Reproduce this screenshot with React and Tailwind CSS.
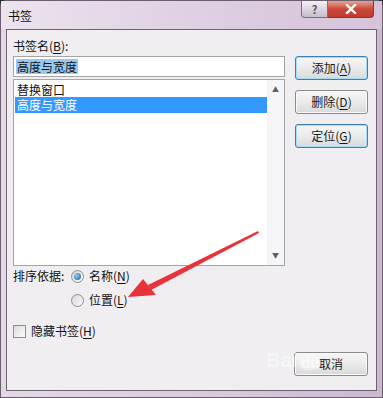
import React from 'react';

const font = { fontFamily: '"Noto Sans CJK SC", "Liberation Sans", sans-serif' };

const Btn = ({ children, active, className = '' }) => (
  <div
    className={`flex h-[24px] w-[73px] items-center justify-center rounded-[3px] border bg-gradient-to-b from-[#f6f6f6] via-[#ebebeb] to-[#d9d9d9] text-[12px] text-[#1a1a1a] ${
      active ? 'border-[#3c7fb1] shadow-[inset_0_0_0_1px_#a6dcf5]' : 'border-[#8a8a8a] shadow-[inset_0_0_0_1px_#fafafa]'
    } ${className}`}
  >
    {children}
  </div>
);

const U = ({ children }) => <span className="underline underline-offset-2">{children}</span>;

const Radio = ({ checked }) => (
  <span className="flex h-[13px] w-[13px] items-center justify-center rounded-full border border-[#8e8f8f] bg-gradient-to-br from-[#d6d6d6] to-[#fbfbfb]">
    {checked && <span className="h-[7px] w-[7px] rounded-full bg-[radial-gradient(circle_at_35%_35%,#8fd0f5,#1d5e8c)]" />}
  </span>
);

export default function App() {
  return (
    <div className="relative h-[398px] w-[383px] overflow-hidden bg-[#2a2a2a]" style={font}>
      <div className="absolute inset-0 rounded-t-[6px] border border-[#6b5f6e] bg-gradient-to-r from-[#e4d8e6] via-[#dccbe0] to-[#cdb8d2]">
        {/* title bar */}
        <div className="flex h-[28px] items-start bg-gradient-to-r from-[#ece4ee] via-[#dfd0e3] to-[#d6c3da]">
          <div className="pl-[7px] pt-[8px] text-[12px] leading-[14px] text-[#111]">书签</div>
          <div className="ml-auto mr-[8px] flex">
            <div className="flex h-[17px] w-[27px] items-center justify-center rounded-bl-[4px] border border-t-0 border-[#7a6f7d] bg-gradient-to-b from-[#f4f0f5] to-[#c9bccc] text-[11px] font-bold leading-none text-[#555]">
              ?
            </div>
            <div className="flex h-[17px] w-[46px] items-center justify-center rounded-br-[4px] border border-l-0 border-t-0 border-[#7a3a36] bg-gradient-to-b from-[#e4a294] via-[#c9483a] to-[#c23b2c]">
              <svg width="12" height="10" viewBox="0 0 12 10">
                <path d="M2 1 L10 9 M10 1 L2 9" stroke="#fff" strokeWidth="2.4" strokeLinecap="square" />
              </svg>
            </div>
          </div>
        </div>

        {/* client */}
        <div className="ml-[5px] mr-[5px] h-[362px] border border-[#6d6470] bg-[#f0eef1]">
          <div className="flex pl-[6px] pt-[9px]">
            <div className="w-[272px]">
              <div className="h-[17px] text-[12px] leading-[14px] text-[#111]">
                书签名(<U>B</U>):
              </div>
              <div className="flex h-[21px] items-center border border-[#a5a5a5] bg-white px-[2px]">
                <span className="bg-[#99c9ef] px-[1px] text-[12px] leading-[15px] text-[#111]">高度与宽度</span>
              </div>
              <div className="mt-[2px] flex h-[187px] border border-[#a5a5a5] bg-white">
                <div className="flex-1 pl-[1px] pt-[2px] text-[12px]">
                  <div className="h-[15px] px-[2px] leading-[15px] text-[#111]">替换窗口</div>
                  <div className="h-[16px] bg-[#3399ff] px-[2px] leading-[16px] text-white">高度与宽度</div>
                </div>
                <div className="flex w-[17px] flex-col items-center justify-between bg-[#f6f5f7] py-[6px] text-[7px] leading-none text-[#606060]">
                  <span>▲</span>
                  <span>▼</span>
                </div>
              </div>
            </div>
            <div className="ml-[10px] flex flex-col gap-[10px] pt-[17px]">
              <Btn active>
                添加(<U>A</U>)
              </Btn>
              <Btn>
                删除(<U>D</U>)
              </Btn>
              <Btn active>
                定位(<U>G</U>)
              </Btn>
            </div>
          </div>

          <div className="mt-[3px] flex pl-[6px] text-[12px] leading-[14px] text-[#111]">
            <span className="w-[58px]">排序依据:</span>
            <div className="flex flex-col gap-[10px]">
              <div className="flex items-center gap-[5px]">
                <Radio checked />
                <span>
                  名称(<U>N</U>)
                </span>
              </div>
              <div className="flex items-center gap-[5px]">
                <Radio />
                <span>
                  位置(<U>L</U>)
                </span>
              </div>
            </div>
          </div>

          <div className="mt-[17px] flex items-center gap-[5px] pl-[6px] text-[12px] leading-[14px] text-[#111]">
            <span className="h-[13px] w-[13px] border border-[#8e8f8f] bg-gradient-to-br from-[#dcdcdc] to-[#fbfbfb]" />
            <span>
              隐藏书签(<U>H</U>)
            </span>
          </div>

          <div className="mt-[14px] flex justify-end pr-[8px]">
            <Btn className="w-[74px]">取消</Btn>
          </div>
        </div>
      </div>

      {/* watermark */}
      <div className="pointer-events-none absolute left-[266px] top-[350px] flex items-end text-[20px] font-bold leading-none text-white/45" style={{ fontFamily: '"Liberation Sans", sans-serif' }}>
        <span>Bai</span>
        <span className="ml-[2px] rounded-full bg-white/35 px-[2px] text-[15px] text-white/60">du</span>
      </div>

      {/* red arrow */}
      <svg className="pointer-events-none absolute left-0 top-0" width="383" height="398" viewBox="0 0 383 398">
        <polygon points="258,231 148,285 151,290 259,233" fill="#e8333a" />
        <polygon points="128,297 143,279 156,295" fill="#e8333a" />
      </svg>
    </div>
  );
}
